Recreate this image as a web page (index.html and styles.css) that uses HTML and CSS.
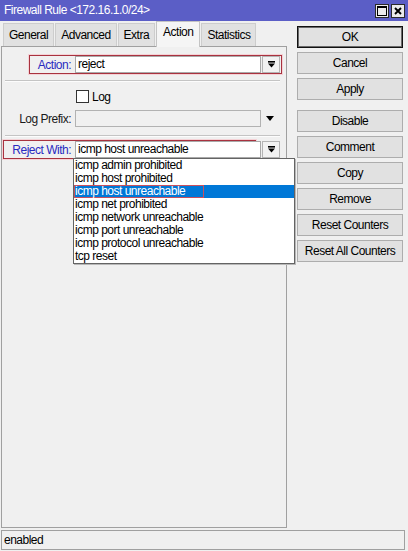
FILE: index.html
```html
<!DOCTYPE html>
<html>
<head>
<meta charset="utf-8">
<title>Firewall Rule</title>
<link rel="stylesheet" href="styles.css">
</head>
<body>
<div class="window">
  <div class="titlebar">
    <span class="title">Firewall Rule &lt;172.16.1.0/24&gt;</span>
    <div class="tb-btns">
      <span class="tb-btn"><svg width="10" height="10" viewBox="0 0 10 10"><rect x="0.5" y="0.5" width="9" height="9" fill="none" stroke="#000"/><rect x="0" y="0" width="10" height="2" fill="#000"/></svg></span>
      <span class="tb-btn"><svg width="8" height="8" viewBox="0 0 8 8"><path d="M1 1L7 7M7 1L1 7" stroke="#000" stroke-width="1.9"/></svg></span>
    </div>
  </div>
  <div class="main">
    <div class="left">
      <div class="tabs">
        <div class="tab">General</div>
        <div class="tab">Advanced</div>
        <div class="tab">Extra</div>
        <div class="tab active">Action</div>
        <div class="tab">Statistics</div>
      </div>
      <div class="panel">
        <div class="hl hl-action">
          <span class="lbl lbl-blue lbl-action">Action:</span>
          <div class="input">reject</div>
          <div class="dd"><svg width="7" height="7" viewBox="0 0 7 7"><rect x="0" y="0" width="7" height="1.6" fill="#000"/><path d="M0 2.6h7L3.5 6.6z" fill="#000"/></svg></div>
        </div>
        <div class="sep sep-1"></div>
        <div class="row row-log">
          <span class="cb"></span>
          <span class="cb-text">Log</span>
        </div>
        <div class="row row-prefix">
          <span class="lbl lbl-plain">Log Prefix:</span>
          <div class="input input-off"></div>
          <svg class="arrow" width="8" height="5" viewBox="0 0 8 5"><path d="M0 0h8L4 5z" fill="#000"/></svg>
        </div>
        <div class="sep sep-2"></div>
        <div class="hl hl-reject">
          <span class="lbl lbl-blue lbl-reject">Reject With:</span>
          <div class="input">icmp host unreachable</div>
          <div class="dd"><svg width="7" height="7" viewBox="0 0 7 7"><rect x="0" y="0" width="7" height="1.6" fill="#000"/><path d="M0 2.6h7L3.5 6.6z" fill="#000"/></svg></div>
          <ul class="popup">
            <li>icmp admin prohibited</li>
            <li>icmp host prohibited</li>
            <li class="sel"><span class="focus">icmp host unreachable</span></li>
            <li>icmp net prohibited</li>
            <li>icmp network unreachable</li>
            <li>icmp port unreachable</li>
            <li>icmp protocol unreachable</li>
            <li>tcp reset</li>
          </ul>
        </div>
      </div>
    </div>
    <div class="right">
      <div class="btn btn-default">OK</div>
      <div class="btn">Cancel</div>
      <div class="btn btn-apply">Apply</div>
      <div class="btn">Disable</div>
      <div class="btn">Comment</div>
      <div class="btn">Copy</div>
      <div class="btn">Remove</div>
      <div class="btn">Reset Counters</div>
      <div class="btn">Reset All Counters</div>
    </div>
  </div>
  <div class="status">enabled</div>
</div>
</body>
</html>
```

FILE: styles.css
```css
html, body {
  margin: 0;
  padding: 0;
}
body {
  width: 408px;
  height: 551px;
  overflow: hidden;
  background: #f0f0f0;
  font-family: "Liberation Sans", Arial, sans-serif;
  font-size: 12px;
  letter-spacing: -0.5px;
  color: #000;
}
.window {
  display: flex;
  flex-direction: column;
  height: 551px;
}
.titlebar {
  height: 21px;
  flex: none;
  background: #5b5ec6;
  color: #fff;
  display: flex;
  align-items: center;
  justify-content: space-between;
  padding: 0 3px 0 4px;
  box-sizing: border-box;
}
.title {
  line-height: 21px;
}
.tb-btns {
  display: flex;
  gap: 2px;
}
.tb-btn {
  width: 14px;
  height: 14px;
  box-sizing: border-box;
  background: #ebebeb;
  border: 1px solid #2a2a2a;
  display: flex;
  align-items: center;
  justify-content: center;
}
.main {
  display: flex;
  height: 507px;
  flex: none;
}
.left {
  margin-left: 1px;
  width: 286px;
  display: flex;
  flex-direction: column;
}
.tabs {
  display: flex;
  align-items: flex-end;
  height: 23px;
  margin: 2px 0 0 2px;
  position: relative;
  z-index: 2;
}
.tab {
  height: 23px;
  box-sizing: border-box;
  padding: 0 5px 0 5px;
  line-height: 22px;
  background: #e1e1e1;
  border: 1px solid #cdcdcd;
  border-bottom: none;
  margin-right: 1px;
}
.tab.active {
  height: 26px;
  margin-bottom: -1px;
  padding: 0 6px;
  line-height: 21px;
  background: #f5f5f5;
  border-color: #c4c4c4;
}
.panel {
  flex: 1;
  border: 1px solid #a0a0a0;
  background: #f0f0f0;
  box-sizing: border-box;
  position: relative;
  padding-top: 8px;
}
.hl {
  display: flex;
  align-items: center;
  width: 253px;
  height: 19px;
  box-sizing: border-box;
  border: 1px solid #a8323f;
  box-shadow: 0 0 0 1px #f4d2d6;
  position: relative;
}
.hl-action {
  margin-left: 27px;
}
.hl-reject {
  margin: 3px 0 0 1px;
}
.lbl {
  text-align: right;
  flex: none;
  margin-right: 4px;
  white-space: nowrap;
}
.lbl-blue {
  color: #2a2ac0;
}
.lbl-action {
  width: 41px;
}
.lbl-reject {
  width: 67px;
}
.lbl-plain {
  width: 69px;
  color: #1a1a1a;
}
.input {
  width: 186px;
  height: 17px;
  box-sizing: border-box;
  border: 1px solid #a9a9a9;
  background: #fff;
  padding-left: 2px;
  line-height: 15px;
  flex: none;
  white-space: nowrap;
  overflow: hidden;
}
.input-off {
  background: #f0f0f0;
  border-color: #b2b2b2;
}
.dd {
  width: 18px;
  height: 17px;
  box-sizing: border-box;
  margin-left: 1px;
  border: 1px solid #b4b4b4;
  background: #f2f2f2;
  display: flex;
  align-items: center;
  justify-content: center;
  flex: none;
}
.sep {
  border-top: 1px solid #c4c4c4;
  border-bottom: 1px solid #fcfcfc;
  margin-left: 3px;
  margin-right: 6px;
}
.sep-1 {
  margin-top: 6px;
}
.sep-2 {
  margin-top: 8px;
}
.row {
  display: flex;
  align-items: center;
}
.row-log {
  height: 13px;
  margin-top: 8px;
  padding-left: 74px;
}
.cb {
  width: 13px;
  height: 13px;
  box-sizing: border-box;
  border: 1px solid #333;
  background: #fff;
  margin-right: 3px;
}
.row-prefix {
  height: 17px;
  margin-top: 7px;
}
.arrow {
  margin-left: 5px;
}
.popup {
  position: absolute;
  left: 69px;
  top: 17px;
  width: 222px;
  margin: 0;
  padding: 0;
  list-style: none;
  background: #fff;
  border: 1px solid #646464;
  box-sizing: border-box;
  box-shadow: 1px 1px 0 #b8b8b8;
  z-index: 5;
}
.popup li {
  height: 13px;
  line-height: 13px;
  padding-left: 1px;
  white-space: nowrap;
}
.popup li.sel {
  background: #0078d7;
  color: #fff;
  padding-left: 0;
}
.focus {
  display: block;
  width: 130px;
  height: 13px;
  box-sizing: border-box;
  padding-left: 1px;
  box-shadow: inset 0 0 0 1px #c8505e;
}
.right {
  margin-left: 10px;
  width: 106px;
  padding-top: 5px;
  display: flex;
  flex-direction: column;
  gap: 4px;
}
.btn {
  height: 22px;
  box-sizing: border-box;
  border: 1px solid #adadad;
  background: #e1e1e1;
  text-align: center;
  line-height: 20px;
  white-space: nowrap;
}
.btn-default {
  border-color: #111;
  box-shadow: inset 0 0 0 1px #6a6a6a;
}
.btn-apply {
  margin-bottom: 6px;
}
.status {
  height: 20px;
  box-sizing: border-box;
  margin: 2px 3px 1px 1px;
  border: 1px solid #a0a0a0;
  padding-left: 2px;
  line-height: 18px;
  background: #f0f0f0;
}
```
